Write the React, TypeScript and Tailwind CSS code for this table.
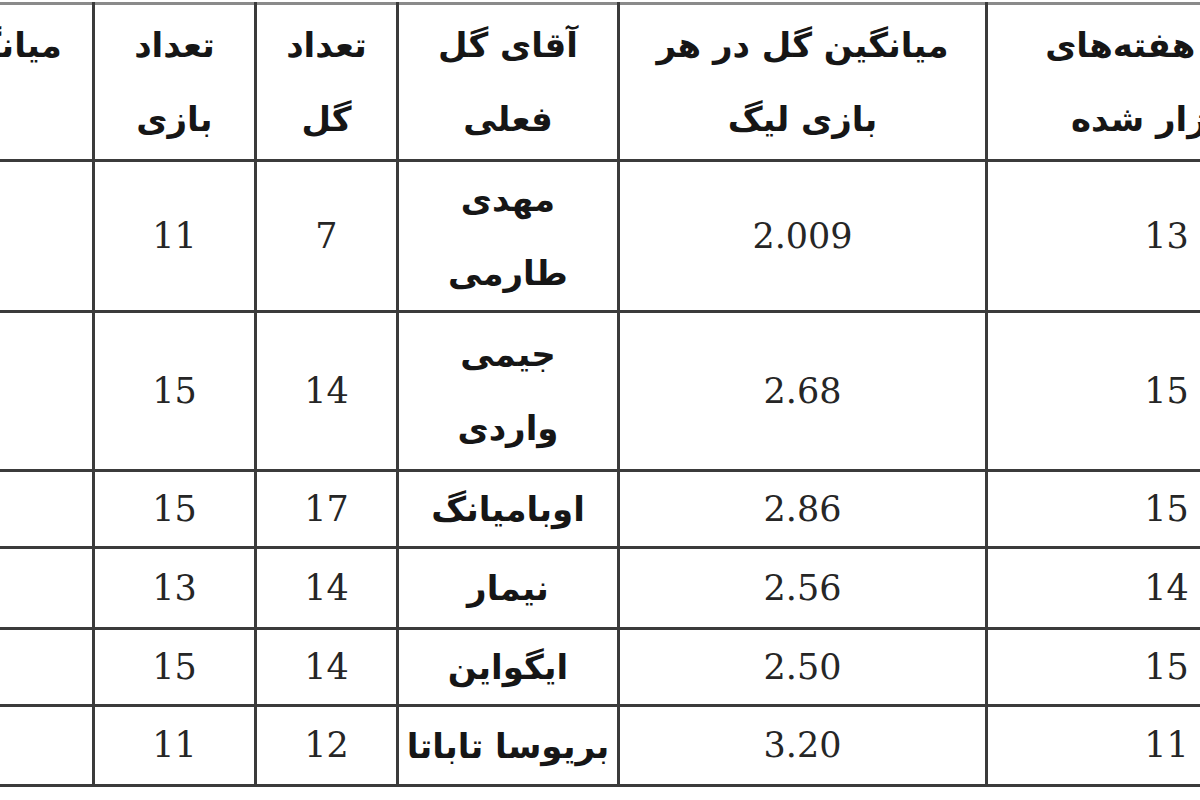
const rows = [
  { weeks: '13', avg: '2.009', name: ['مهدی', 'طارمی'], goals: '7', games: '11', h: 'h-[150px]' },
  { weeks: '15', avg: '2.68', name: ['جیمی', 'واردی'], goals: '14', games: '15', h: 'h-[159px]' },
  { weeks: '15', avg: '2.86', name: ['اوبامیانگ'], goals: '17', games: '15', h: 'h-[74px]' },
  { weeks: '14', avg: '2.56', name: ['نیمار'], goals: '14', games: '13', h: 'h-[81px]' },
  { weeks: '15', avg: '2.50', name: ['ایگواین'], goals: '14', games: '15', h: 'h-[75px]' },
  { weeks: '11', avg: '3.20', name: ['بریوسا تاباتا'], goals: '12', games: '11', h: 'h-[80px]' },
];

const fa = "font-['DejaVu_Sans',sans-serif] font-bold text-[34px] leading-[74px] text-[#161616]";
const num = "font-['DejaVu_Serif',serif] text-[35px] text-[#262626]";
const cell = 'border-[3px] border-[#3b3b3b] text-center align-middle p-0';

export default function App() {
  return (
    <div className="w-[1200px] h-[800px] overflow-hidden bg-white pt-[2px]">
      <table dir="rtl" className="table-fixed border-collapse ml-[-158px] w-[1503px] border-t-[3px] border-t-[#8a8a8a]">
        <colgroup>
          <col className="w-[360px]" />
          <col className="w-[368px]" />
          <col className="w-[221px]" />
          <col className="w-[142px]" />
          <col className="w-[162px]" />
          <col className="w-[250px]" />
        </colgroup>
        <thead>
          <tr className="h-[157px]">
            <th className={`${cell} ${fa} border-t-[#8a8a8a]`}>تعداد هفته‌های<br />برگزار شده</th>
            <th className={`${cell} ${fa} border-t-[#8a8a8a]`}>میانگین گل در هر<br />بازی لیگ</th>
            <th className={`${cell} ${fa} border-t-[#8a8a8a]`}>آقای گل<br />فعلی</th>
            <th className={`${cell} ${fa} border-t-[#8a8a8a]`}>تعداد<br />گل</th>
            <th className={`${cell} ${fa} border-t-[#8a8a8a]`}>تعداد<br />بازی</th>
            <th className={`${cell} ${fa} border-t-[#8a8a8a]`}>میانگین گل<br />زده</th>
          </tr>
        </thead>
        <tbody>
          {rows.map((r) => (
            <tr key={r.avg} className={r.h}>
              <td className={`${cell} ${num}`}>{r.weeks}</td>
              <td className={`${cell} ${num}`}>{r.avg}</td>
              <td className={`${cell} ${fa} whitespace-nowrap`}>
                {r.name.map((n, i) => (
                  <div key={i}>{n}</div>
                ))}
              </td>
              <td className={`${cell} ${num}`}>{r.goals}</td>
              <td className={`${cell} ${num}`}>{r.games}</td>
              <td className={`${cell} ${num}`}></td>
            </tr>
          ))}
        </tbody>
      </table>
    </div>
  );
}
